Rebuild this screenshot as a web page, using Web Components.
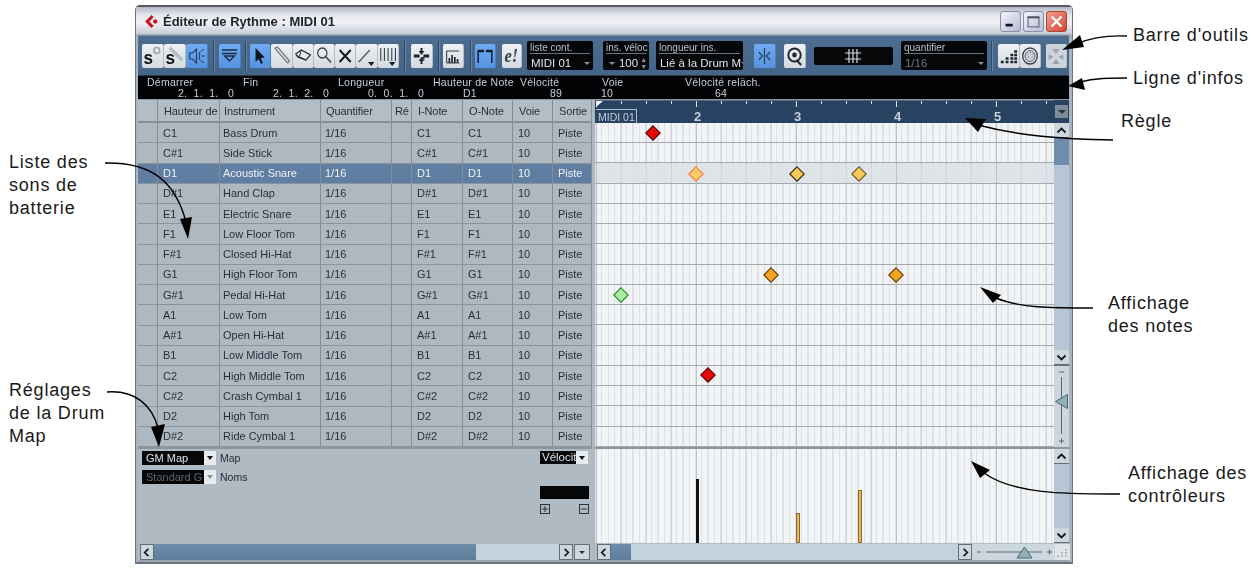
<!DOCTYPE html>
<html lang="fr">
<head>
<meta charset="utf-8">
<title>Éditeur de Rythme</title>
<style>
  html, body { margin: 0; background: #fff; overflow: hidden; }
  body { font-family: "Liberation Sans", Arial, sans-serif; }
</style>
</head>
<body>
<doc-page>
  <cb-window heading="Éditeur de Rythme : MIDI 01">
    <cb-toolbar>
      <cb-btn icon="solo" w="22"></cb-btn><cb-btn icon="link" w="22"></cb-btn><cb-btn icon="speaker" w="22" on></cb-btn>
      <cb-sep l="5" r="5"></cb-sep>
      <cb-btn icon="funnel" w="22" on></cb-btn>
      <cb-sep l="4" r="4"></cb-sep>
      <cb-btn icon="arrow" w="21.3" on></cb-btn><cb-btn icon="pencil" w="21.3"></cb-btn><cb-btn icon="eraser" w="21.3"></cb-btn><cb-btn icon="zoom" w="21.3"></cb-btn><cb-btn icon="cross" w="21.3"></cb-btn><cb-btn icon="line" w="21.3"></cb-btn><cb-btn icon="stick" w="21.2"></cb-btn>
      <cb-sep l="5" r="6"></cb-sep>
      <cb-btn icon="nudge" w="22"></cb-btn>
      <cb-sep l="5" r="4"></cb-sep>
      <cb-btn icon="level" w="21"></cb-btn>
      <cb-sep l="6" r="4"></cb-sep>
      <cb-btn icon="bars" w="21" on></cb-btn>
      <cb-btn icon="edit" w="20" style="margin-left:6px"></cb-btn>
      <cb-field label="liste cont." value="MIDI 01" w="66" caret style="margin-left:5px"></cb-field>
      <cb-field label="ins. véloc" value="100" w="46" spin style="margin-left:10px"></cb-field>
      <cb-field label="longueur ins." value="Lié à la Drum M" w="87" caret style="margin-left:7px"></cb-field>
      <cb-btn icon="snap" w="22" on style="margin-left:11px"></cb-btn>
      <cb-btn icon="quant" w="22" style="margin-left:8px"></cb-btn>
      <cb-grid-display style="margin-left:8px"></cb-grid-display>
      <cb-field label="quantifier" value="1/16" w="86" caret dim style="margin-left:8px"></cb-field>
      <cb-sep l="4" r="6"></cb-sep>
      <cb-btn icon="steps" w="22"></cb-btn><cb-btn icon="dial" w="21"></cb-btn>
      <cb-btn icon="pads" w="21" style="margin-left:5px" faded></cb-btn>
    </cb-toolbar>
    <cb-infoline></cb-infoline>
    <cb-editor>
      <drum-list slot="list"></drum-list>
      <map-panel slot="panel"></map-panel>
      <cb-hscroll slot="lscroll" thumb="322" rest="83" menu></cb-hscroll>
      <note-grid slot="grid">
        <cb-note x="57.7" y="10" fill="#e80808" edge="#5c0505"></cb-note>
        <cb-note x="101" y="50.5" fill="#ffcb62" edge="#f08050"></cb-note>
        <cb-note x="201.7" y="50.5" fill="#f7cb58" edge="#3c2c10"></cb-note>
        <cb-note x="263.5" y="50.5" fill="#f7cb58" edge="#6e5c30"></cb-note>
        <cb-note x="176" y="151.5" fill="#f5a623" edge="#6a3c08"></cb-note>
        <cb-note x="301" y="151.5" fill="#f5a623" edge="#6a3c08"></cb-note>
        <cb-note x="26" y="171.5" fill="#a6f2a0" edge="#2a8a30"></cb-note>
        <cb-note x="113" y="252" fill="#e80808" edge="#5c0505"></cb-note>
      </note-grid>
      <cb-vscroll slot="gridscroll" thumb="27" zoom></cb-vscroll>
      <ctrl-lane slot="lane"></ctrl-lane>
      <cb-vscroll slot="lanescroll"></cb-vscroll>
      <cb-hscroll slot="rscroll" thumb="0" rest="345" zoom></cb-hscroll>
    </cb-editor>
  </cb-window>
  <call-outs></call-outs>
</doc-page>

<script>
const FONT = '"Liberation Sans", Arial, sans-serif';

// small base so every element only has to give its css + markup
class Part extends HTMLElement {
  constructor() {
    super();
    this.attachShadow({ mode: 'open' });
  }
  connectedCallback() {
    this.shadowRoot.innerHTML = `<style>${this.css()}</style>${this.html()}`;
  }
  css() { return ':host{display:block}'; }
  html() { return '<slot></slot>'; }
}

class DocPage extends Part {
  css() { return `:host{display:block;position:relative;width:1251px;height:570px;box-sizing:border-box;padding:5px 0 0 135px;font-family:${FONT}}`; }
}

const CAPTION_BTN = {
  min: '<rect x="5" y="13" width="8" height="3" fill="#101828"/>',
  max: '<rect x="4.5" y="5.5" width="12" height="11" fill="none" stroke="#4a5060"/><rect x="4" y="5" width="13" height="2" fill="#4a5060"/>',
  close: '<path d="M5 5l11 11M16 5L5 16" stroke="#fff" stroke-width="2.6" fill="none"/>'
};

class CbWindow extends Part {
  css() {
    return `
    :host{display:block;width:938px;height:559px;box-sizing:border-box;border:1px solid #6d7280;border-top:2px solid #555a63;border-bottom:2px solid #6d7280;background:#a9b3bd;border-radius:5px 5px 0 0;filter:blur(.3px)}
    .frame{display:flex;flex-direction:column;height:100%;padding:0 3px 0 2px;box-sizing:border-box}
    .title{height:28px;flex:none;margin:0 -3px 0 -2px;padding:0 4px 0 8px;display:flex;align-items:center;gap:4px;
      background:linear-gradient(#b4b8c6 0,#e6e8ee 8px,#f0f1f5 16px,#c7cbd6 27px,#8b92a3 28px);font:bold 13px ${FONT};color:#20242c}
    .title svg.logo{flex:none;margin-top:1px}
    .title span{flex:1}
    .caps{display:flex;gap:2px;margin-right:1px}
    .cap{width:21px;height:21px;border-radius:3px;border:1px solid #8a8da4;box-sizing:border-box;background:linear-gradient(135deg,#f4f4fa,#b8bcd4)}
    .cap.x{background:linear-gradient(135deg,#f0a08c,#d6443a);border-color:#a8483c}
    .cap svg{display:block}
    `;
  }
  html() {
    const cap = (k, cls = '') => `<div class="cap ${cls}"><svg width="19" height="19" viewBox="0 0 21 21">${CAPTION_BTN[k]}</svg></div>`;
    return `<div class="frame">
      <div class="title">
        <svg class="logo" width="15" height="15" viewBox="0 0 14 14"><path d="M7 1L1 7l6 6 2-2-4-4 4-4z" fill="#c8141c"/><circle cx="10.5" cy="7" r="2" fill="#c8141c"/></svg>
        <span>${this.getAttribute('heading')}</span>
        <div class="caps">${cap('min')}${cap('max')}${cap('close', 'x')}</div>
      </div>
      <slot></slot>
    </div>`;
  }
}

class CbToolbar extends Part {
  css() {
    return `:host{display:flex;align-items:center;flex:none;height:40px;padding-left:4px;box-sizing:border-box;
      background:linear-gradient(#4c6d8f,#44658a);border-top:1px solid #7d93aa}`;
  }
}

class CbSep extends Part {
  connectedCallback() {
    this.style.margin = `0 ${this.getAttribute('r') || 4}px 0 ${this.getAttribute('l') || 4}px`;
    super.connectedCallback();
  }
  css() { return ':host{display:block;flex:none;width:1px;height:30px;background:#2f4a66;box-shadow:1px 0 #6584a3}'; }
  html() { return ''; }
}

const ICONS = {
  solo: '<text x="1.500" y="20" font-family="Liberation Sans" font-weight="bold" font-size="18" fill="#111">s</text><circle cx="15.500" cy="6.500" r="3" fill="none" stroke="#9aa4ae" stroke-width="1.6"/>',
  link: '<text x="1.500" y="20" font-family="Liberation Sans" font-weight="bold" font-size="18" fill="#111">s</text><path d="M6 4l13 12" stroke="#9aa4ae" stroke-width="3" fill="none"/><path d="M6.500 4.500l12 11" stroke="#e8ecef" stroke-width="1" fill="none"/>',
  speaker: '<path d="M4 9h3l4-4v14l-4-4H4z" fill="none" stroke="#24405e" stroke-width="1.2"/><path d="M14 8v8M16 12h4M15 8l4-3M15 16l4 3" stroke="#24405e" stroke-width="1"/>',
  funnel: '<path d="M3 6h16M3 9.500h16" stroke="#1c2e44" stroke-width="1.6"/><path d="M6 12h10l-5 5z" fill="none" stroke="#1c2e44" stroke-width="1.5"/>',
  arrow: '<path d="M6 4l0 14 3.500-3 2.500 5 2-1-2.500-5 4.500-.5z" fill="#0c1420"/>',
  pencil: '<path d="M4 4l14 15M7 3l13 14M4 4l3-1M18 19l2-2" stroke="#6d7680" stroke-width="1.2" fill="none"/>',
  eraser: '<path d="M3 10l6-4 10 5-5 5-9-3z" fill="#e8ecef" stroke="#222" stroke-width="1.1"/><path d="M3 11l11 5M9 6l-2 6" stroke="#222" stroke-width="1"/>',
  zoom: '<circle cx="9" cy="9" r="5" fill="none" stroke="#333c46" stroke-width="1.3"/><path d="M12.500 12.500l6 6" stroke="#333c46" stroke-width="1.6"/>',
  cross: '<path d="M5 6l12 12M17 6L5 18" stroke="#141a20" stroke-width="2.2"/>',
  line: '<path d="M3 18L15 6" stroke="#4a525c" stroke-width="1.4"/><path d="M13 18h7l-3.500 4z" fill="#141a20"/>',
  stick: '<path d="M3 4v13M7 4v13M11 4v13M15 4v13M19 4v13" stroke="#39424c" stroke-width="1.2"/><path d="M12 18h7l-3.500 4z" fill="#141a20"/>',
  nudge: '<path d="M3 12h6M13 12h6" stroke="#1c2430" stroke-width="3"/><path d="M11 4v3M11 17v3" stroke="#1c2430" stroke-width="2"/><path d="M8 7h6l-3 4zM14 16l-3-3 3 0z M8 17l3-4 3 4z" fill="#1c2430"/>',
  level: '<path d="M4 19V7h14M4 19h14" fill="none" stroke="#39424c" stroke-width="1.2"/><path d="M7 19v-5M10 19v-8M13 19v-6M16 19v-4" stroke="#1c2430" stroke-width="1.8"/>',
  bars: '<path d="M3.500 19V7h6M12.500 7h6v12" fill="none" stroke="#101c2c" stroke-width="1.6"/><path d="M3 7h7M12 7h7" stroke="#101c2c" stroke-width="2.6"/>',
  edit: '<text x="3" y="18" font-family="Liberation Serif" font-style="italic" font-weight="bold" font-size="19" fill="#34404c">e!</text>',
  snap: '<path d="M11 4v16" stroke="#24405e" stroke-width="1.2"/><path d="M5 8l4 4-4 4M17 8l-4 4 4 4" fill="none" stroke="#24405e" stroke-width="1.2"/>',
  quant: '<circle cx="11" cy="11" r="6.500" fill="none" stroke="#1c2430" stroke-width="2"/><circle cx="11" cy="11" r="2.400" fill="#1c2430"/><path d="M13 16l5 5" stroke="#1c2430" stroke-width="2"/>',
  steps: '<path d="M3 18h3M8 18h3M8 14.500h3M13 18h3M13 14.500h3M13 11h3M17 18h3M17 14.500h3M17 11h3M17 7.500h3" stroke="#1c2430" stroke-width="2.400"/>',
  dial: '<circle cx="11" cy="12" r="8" fill="none" stroke="#3b444e" stroke-width="1.5"/><circle cx="11" cy="12" r="5.500" fill="#c8ced4" stroke="#59626c"/><path d="M8 10h.6M11 8.500h.6M14 10h.6M9 13h.6M13 13h.6" stroke="#2a3138" stroke-width="1.2"/>',
  pads: '<path d="M7 5h8l-4 5zM3 10l5 3-5 3zM19 10l-5 3 5 3zM7 20h8l-4-5z" fill="#9aa3ab"/>'
};

class CbBtn extends Part {
  css() {
    const w = this.getAttribute('w') || 21;
    const on = this.hasAttribute('on');
    return `:host{display:block;flex:none;width:${w}px;height:24px;box-sizing:border-box;border-radius:2px;
      background:${on ? 'linear-gradient(#6fabf2,#5593e0)' : this.hasAttribute('faded') ? '#cdd5db' : 'linear-gradient(#eef1f3,#d4dae0)'};
      border-right:1px solid ${on ? '#4b80c4' : '#b4bdc6'}}
      svg{display:block;width:100%;height:100%}`;
  }
  html() {
    return `<svg viewBox="0 0 22 24" preserveAspectRatio="none">${ICONS[this.getAttribute('icon')] || ''}</svg>`;
  }
}

class CbField extends Part {
  css() {
    return `:host{display:block;flex:none;width:${this.getAttribute('w')}px;height:29px;box-sizing:border-box;background:#050709;padding:1px 3px;border-radius:2px;color:#dfe4e8;font:10px ${FONT};overflow:hidden}
    .l{height:11px;line-height:11px;border-bottom:1px solid #6a727a;color:#b8c0c8;white-space:nowrap}
    .v{display:flex;align-items:center;height:15px;font-size:11.5px;white-space:nowrap;margin-left:1px;margin-top:1px}
    .v span{flex:1}
    .dim{color:#70787f}
    i{flex:none;width:0;height:0;border:3px solid transparent;border-top:3px solid #8a929a;border-bottom:0;margin:1px 0 0 0}
    .pre{flex:none;margin:1px 4px 0 2px}
    .spin{flex:none;font-size:7px;line-height:7px;color:#8a929a;margin-left:2px;text-align:center}`;
  }
  html() {
    const caret = this.hasAttribute('caret') ? '<i></i>' : '';
    const pre = this.hasAttribute('spin') ? '<i class="pre"></i>' : '';
    const spin = this.hasAttribute('spin') ? '<div class="spin">▲<br>▼</div>' : '';
    return `<div class="l">${this.getAttribute('label')}</div>
      <div class="v ${this.hasAttribute('dim') ? 'dim' : ''}">${pre}<span>${this.getAttribute('value')}</span>${spin}${caret}</div>`;
  }
}

class CbGridDisplay extends Part {
  css() { return ':host{display:flex;flex:none;width:79px;height:18px;background:#050709;border-radius:2px;align-items:center;justify-content:center}'; }
  html() { return '<svg width="16" height="14" viewBox="0 0 16 14"><path d="M4 0v14M8 0v14M12 0v14M0 4h16M0 10h16" stroke="#d8dee2" stroke-width="1.2"/></svg>'; }
}

const INFO = [
  { w: 96, pad: 0, label: 'Démarrer', vpad: 31, value: '2.&nbsp; 1.&nbsp; 1.&nbsp;&nbsp; 0' },
  { w: 95, pad: 0, label: 'Fin', vpad: 30, value: '2.&nbsp; 1.&nbsp; 2.&nbsp;&nbsp; 0' },
  { w: 95, pad: 0, label: 'Longueur', vpad: 30, value: '0.&nbsp; 0.&nbsp; 1.&nbsp;&nbsp; 0' },
  { w: 87, pad: 0, label: 'Hauteur de Note', vpad: 30, value: 'D1' },
  { w: 81, pad: 0, label: 'Vélocité', vpad: 30, value: '89' },
  { w: 84, pad: 1, label: 'Voie', vpad: 0, value: '10' },
  { w: 200, pad: 0, label: 'Vélocité reläch.', vpad: 30, value: '64' }
];

class CbInfoline extends Part {
  css() {
    return `:host{display:flex;flex:none;height:25px;box-sizing:border-box;background:#020304;padding:1px 0 0 9px;color:#c8ced4;font:10.5px ${FONT};letter-spacing:.25px;border-top:1px solid #2a3a4a;border-bottom:1px solid #8c98a4}
    .c{flex:none;line-height:10.5px;white-space:nowrap}`;
  }
  html() {
    return INFO.map(c => `<div class="c" style="width:${c.w}px">
      <div style="padding-left:${c.pad}px">${c.label}</div>
      <div style="padding-left:${c.vpad}px">${c.value}</div></div>`).join('');
  }
}

// main area: two columns, upper lists + lower lanes + scrollbars
class CbEditor extends Part {
  css() {
    return `:host{display:grid;flex:1;min-height:0;grid-template-columns:454px 3px 459px 15px;grid-template-rows:347px 2px 94px 17px;background:#9aa5af}
    .gap{background:#aeb8c1;grid-row:1/5;grid-column:2}
    .split{background:#8c969f;grid-row:2;grid-column:3/5}
    .splitl{background:#8c969f;grid-row:2;grid-column:1}`;
  }
  html() {
    const s = (n, st) => `<slot name="${n}" style="display:block;${st}"></slot>`;
    return `<div class="gap"></div><div class="splitl"></div><div class="split"></div>
      <div style="grid-row:1;grid-column:1;min-height:0;min-width:0">${s('list')}</div>
      <div style="grid-row:3;grid-column:1">${s('panel', 'height:100%')}</div>
      <div style="grid-row:4;grid-column:1">${s('lscroll')}</div>
      <div style="grid-row:1;grid-column:3;min-width:0">${s('grid')}</div>
      <div style="grid-row:1;grid-column:4">${s('gridscroll')}</div>
      <div style="grid-row:3;grid-column:3">${s('lane')}</div>
      <div style="grid-row:3;grid-column:4">${s('lanescroll')}</div>
      <div style="grid-row:4;grid-column:3/5">${s('rscroll')}</div>`;
  }
}

const DRUMS = [
  ['C1', 'Bass Drum', 'C1'], ['C#1', 'Side Stick', 'C#1'], ['D1', 'Acoustic Snare', 'D1'], ['D#1', 'Hand Clap', 'D#1'],
  ['E1', 'Electric Snare', 'E1'], ['F1', 'Low Floor Tom', 'F1'], ['F#1', 'Closed Hi-Hat', 'F#1'], ['G1', 'High Floor Tom', 'G1'],
  ['G#1', 'Pedal Hi-Hat', 'G#1'], ['A1', 'Low Tom', 'A1'], ['A#1', 'Open Hi-Hat', 'A#1'], ['B1', 'Low Middle Tom', 'B1'],
  ['C2', 'High Middle Tom', 'C2'], ['C#2', 'Crash Cymbal 1', 'C#2'], ['D2', 'High Tom', 'D2'], ['D#2', 'Ride Cymbal 1', 'D#2']
];
const PADS = [0, 5, 3, 4, 0, 5, 5, 5, 5];

class DrumList extends Part {
  css() {
    return `:host{display:grid;height:347px;grid-template-columns:20px 62px 101px 71px 20px 51px 50px 40px 39px;grid-template-rows:23px repeat(16,20.25px);font:11px ${FONT};color:#26303b;background:#aeb8c1}
    div{box-sizing:border-box;border-right:1px solid #838e99;border-bottom:1px solid #8a949e;white-space:nowrap;overflow:hidden;display:flex;align-items:center}
    .h{background:#b3bdc6;border-bottom:2px solid #838e99;letter-spacing:-.1px}
    .sel{background:#5f7ea1;color:#eef2f6}`;
  }
  html() {
    const heads = ['', 'Hauteur de', 'Instrument', 'Quantifier', 'Ré', 'I-Note', 'O-Note', 'Voie', 'Sortie'];
    let out = heads.map((h, i) => `<div class="h" style="padding-left:${i === 4 ? 3 : PADS[i] + (i ? 1 : 0)}px">${h}</div>`).join('');
    DRUMS.forEach((d, r) => {
      const sel = r === 2 ? 'sel' : '';
      [ '', d[0], d[1], '1/16', '', d[2], d[2], '10', 'Piste' ].forEach((t, i) => {
        out += `<div class="${sel}" style="padding-left:${PADS[i]}px">${t}</div>`;
      });
    });
    return out;
  }
}

class MapPanel extends Part {
  css() {
    return `:host{display:flex;justify-content:space-between;height:94px;box-sizing:border-box;background:#b0bac3;padding:2px 3px 0 4px;font:10.5px ${FONT};color:#1e2833}
    .rows{display:flex;flex-direction:column;gap:5px}
    .row{display:flex;align-items:center;gap:4px;height:14px}
    .box{width:62px;height:14px;background:#050709;color:#dfe4e8;font-size:11px;line-height:14px;padding-left:4px;box-sizing:border-box;white-space:nowrap}
    .dim{color:#5c646c}
    .dd{width:12px;height:14px;background:#e8ecef;margin-left:-4px;display:flex;align-items:center;justify-content:center}
    .dd i{width:0;height:0;border:3.5px solid transparent;border-top:4px solid #111;border-bottom:0}
    .dd.off i{border-top-color:#8b939b}
    .right{width:49px;display:flex;flex-direction:column}
    .vel{display:flex;height:13px}
    .vel .box{width:36px;padding-left:2px;font-size:11.5px;line-height:13px;height:13px}
    .vel .dd{height:13px;margin:0}
    .bar{height:13px;background:#050709;margin-top:22px}
    .pm{display:flex;justify-content:space-between;margin-top:5px}
    .pm svg{display:block}`;
  }
  html() {
    return `<div class="rows">
        <div class="row"><div class="box">GM Map</div><div class="dd"><i></i></div><span>Map</span></div>
        <div class="row"><div class="box dim">Standard G</div><div class="dd off"><i></i></div><span>Noms</span></div>
      </div>
      <div class="right">
        <div class="vel"><div class="box">Vélocit</div><div class="dd"><i></i></div></div>
        <div class="bar"></div>
        <div class="pm">
          <svg width="10" height="10" viewBox="0 0 10 10"><rect x=".5" y=".5" width="9" height="9" fill="none" stroke="#2a333c"/><path d="M2 5h6M5 2v6" stroke="#2a333c"/></svg>
          <svg width="10" height="10" viewBox="0 0 10 10"><rect x=".5" y=".5" width="9" height="9" fill="none" stroke="#2a333c"/><path d="M2 5h6" stroke="#2a333c"/></svg>
        </div>
      </div>`;
  }
}

// shared grid lines of the note display and the controller lane
const LINES_V = `repeating-linear-gradient(90deg,transparent 0 1px,#bcc2c6 1px 2px,transparent 2px 100px),
  repeating-linear-gradient(90deg,transparent 0 1px,#cfd5da 1px 2px,transparent 2px 25px),
  repeating-linear-gradient(90deg,#dde2e6 0 1px,transparent 1px 6.25px)`;

class NoteGrid extends Part {
  css() {
    return `:host{display:flex;flex-direction:column;height:347px}
    .ruler{flex:none;height:23px;position:relative;background:#274361;box-sizing:border-box;overflow:hidden;color:#c4d0da;font:bold 13px ${FONT}}
    .ruler svg{position:absolute;left:0;top:0}
    .ruler b{position:absolute;top:9px;font-size:13px}
    .midi{position:absolute;left:1px;top:9px;width:41px;height:14px;box-sizing:border-box;border:1px solid #aebccb;border-bottom:0;border-left:0;font:10.5px/14px ${FONT};color:#c2ccd6;padding-left:2px;white-space:nowrap}
    .cv{flex:1;position:relative;overflow:hidden;background:
      repeating-linear-gradient(180deg,transparent 0 19.25px,#a3a9ad 19.25px 20.25px),
      ${LINES_V},
      linear-gradient(180deg,transparent 40.5px,#dfe4e9 40.5px 60.75px,transparent 60.75px),#f1f3f5}`;
  }
  html() {
    let ticks = '';
    for (let i = 0; i < 19; i++) {
      const x = 1.5 + i * 25;
      ticks += `<path d="M${x} 1v${i % 4 === 0 ? 6 : 3}" stroke="#dde4ea"/>`;
    }
    const nums = [2, 3, 4, 5].map((n, i) => `<b style="left:${99 + i * 100}px">${n}</b>`).join('');
    return `<div class="ruler">
        <svg width="459" height="23">${ticks}<path d="M1 1h7l-7 6z" fill="#f0f4f8"/><path d="M0 0h459" stroke="#8d99a5"/></svg>
        <div class="midi">MIDI 01</div>${nums}
      </div>
      <div class="cv"><slot></slot></div>`;
  }
}

class CbNote extends Part {
  css() {
    return `:host{position:absolute;left:${this.getAttribute('x') - 8}px;top:${this.getAttribute('y') - 8}px;width:16px;height:16px;display:block}
      svg{display:block}`;
  }
  html() {
    return `<svg width="16" height="16" viewBox="0 0 16 16"><path d="M8 .8L15.2 8 8 15.2.8 8z" fill="${this.getAttribute('fill')}" stroke="${this.getAttribute('edge')}" stroke-width="1.2"/></svg>`;
  }
}

class CtrlLane extends Part {
  css() {
    return `:host{display:flex;align-items:flex-end;height:94px;position:relative;background:${LINES_V},#f2f4f5}
      i{position:absolute;bottom:0;width:3px}`;
  }
  html() {
    return `<i style="left:101px;height:64px;background:#111"></i>
      <i style="left:201px;height:30px;background:#e6b45e;border:1px solid #8a6a30;box-sizing:border-box;width:4px"></i>
      <i style="left:263px;height:53px;background:#e6b45e;border:1px solid #8a6a30;box-sizing:border-box;width:4px"></i>`;
  }
}

const chev = d => `<svg width="13" height="13" viewBox="0 0 13 13"><path d="${d}" fill="none" stroke="#10161c" stroke-width="1.8"/></svg>`;

class CbVscroll extends Part {
  css() {
    const zoom = this.hasAttribute('zoom');
    return `:host{display:flex;flex-direction:column;height:${zoom ? 347 : 94}px;background:#7c8c9c}
      .pad{flex:none;height:${zoom ? 23 : 0}px;background:#274361;display:flex;align-items:center;justify-content:center;box-sizing:border-box}
      .pad i{width:13px;height:13px;background:#7e8c99;display:flex;align-items:center;justify-content:center}
      .pad i::after{content:"";border:4px solid transparent;border-top:4px solid #27323c;border-bottom:0}
      .b{flex:none;height:14px;background:#cfd6dc;display:flex;align-items:center;justify-content:center;border-bottom:1px solid #5f7080}
      .thumb{flex:none;height:${this.getAttribute('thumb') || 0}px;background:#6f8dab}
      .track{flex:1;background:#b6c6d6}
      .zoom{flex:none;height:81px;background:#ccd6de;position:relative;border-top:1px solid #5f7080;color:#4a5560}
      .zoom svg{position:absolute;left:0;top:0}`;
  }
  html() {
    const zoom = this.hasAttribute('zoom');
    return `${zoom ? '<div class="pad"><i></i></div>' : ''}
      <div class="b">${chev('M2.5 8.5l4-4 4 4')}</div>
      <div class="thumb"></div><div class="track"></div>
      <div class="b">${chev('M2.5 4.5l4 4 4-4')}</div>
      ${zoom ? `<div class="zoom"><svg width="15" height="81" viewBox="0 0 15 81">
        <path d="M7.5 11v57M5 6h5M5 75h5M7.5 72.500v5" stroke="#5a6670" fill="none"/>
        <path d="M1.500 35.500l12-7v14z" fill="#8fb2b8" stroke="#4c6670" stroke-width="1"/></svg></div>` : ''}`;
  }
}

class CbHscroll extends Part {
  css() {
    return `:host{display:flex;height:17px;background:#b0bbc5;box-sizing:border-box;padding:1px 0 0 2px;align-items:stretch}
      .b{flex:none;width:14px;background:#cfd6dc;display:flex;align-items:center;justify-content:center;border:1px solid #5f7080;box-sizing:border-box}
      .thumb{flex:none;background:linear-gradient(#6f8dab,#5f7e9c)}
      .track{flex:none;background:#c4d2de}
      .m{flex:none;width:16px;margin:0 1px;background:#cfd6dc;border:1px solid #5f7080;box-sizing:border-box;display:flex;align-items:center;justify-content:center}
      .m::after{content:"";border:3px solid transparent;border-top:3px solid #27323c;border-bottom:0}
      .z{flex:none;width:83px;background:#ccd6de;display:block}
      .grip{flex:none;width:15px;background:#dfe4e8}`;
  }
  html() {
    const zoom = this.hasAttribute('zoom');
    const thumb = +this.getAttribute('thumb');
    const rest = +this.getAttribute('rest');
    return `<div class="b">${chev('M8 2.500l-4 4 4 4')}</div>
      <div class="thumb" style="width:${zoom ? 20 : thumb}px"></div>
      <div class="track" style="width:${zoom ? 327 : rest}px"></div>
      <div class="b">${chev('M5 2.500l4 4-4 4')}</div>
      ${this.hasAttribute('menu') ? '<div class="m"></div>' : ''}
      ${zoom ? `<svg class="z" viewBox="0 0 83 16" width="83" height="16">
          <path d="M5 8h4M14 8h56M75 8h5M77.500 5.500v5" stroke="#5a6670" fill="none"/>
          <path d="M45 14l7.500-11 7.500 11z" fill="#8fb2b8" stroke="#4c6670" stroke-width="1"/></svg>
        <svg class="grip" viewBox="0 0 15 16" width="15" height="16"><path d="M10 6h2M6 9h2M10 9h2M2 12h2M6 12h2M10 12h2" stroke="#8b949c"/></svg>` : ''}`;
  }
}

// annotations round the window
const ARROWS = [
  ['M1127 36C1105 35 1090 38 1076 44', 'M1062 50L1080 35 1084 47z'],
  ['M1127 78C1110 78 1095 78 1080 82', 'M1068 86L1082 78 1085 90z'],
  ['M1113 140C1060 139 1020 136 978 125', 'M965 118L986 119 978 132z'],
  ['M105 163C150 162 175 180 186 222', 'M188 239L180 219 192 217z'],
  ['M107 392C135 390 152 405 158 428', 'M159 447L151 427 165 424z'],
  ['M1093 308C1050 308 1020 308 996 298', 'M980 287L1001 295 993 303z'],
  ['M1120 494C1070 494 1015 495 984 473', 'M971 461L990 470 980 478z']
];
const LABELS = [
  [1133, 24, "Barre d'outils"], [1133, 67, "Ligne d'infos"], [1121, 110, 'Règle'],
  [9, 151, 'Liste des<br>sons de<br>batterie'], [9, 379, 'Réglages<br>de la Drum<br>Map'],
  [1108, 292, 'Affichage<br>des notes'], [1128, 462, 'Affichage des<br>contrôleurs']
];

class CallOuts extends Part {
  css() {
    return `:host{position:absolute;left:0;top:0;width:1251px;height:570px;pointer-events:none;display:block}
      svg{position:absolute;left:0;top:0}
      div{position:absolute;font:18px/23px ${FONT};letter-spacing:.8px;color:#1a1a1a;white-space:nowrap}`;
  }
  html() {
    const paths = ARROWS.map(a => `<path d="${a[0]}" fill="none" stroke="#000" stroke-width="1.4"/><path d="${a[1]}" fill="#000"/>`).join('');
    return `<svg width="1251" height="570">${paths}</svg>` +
      LABELS.map(l => `<div style="left:${l[0]}px;top:${l[1]}px">${l[2]}</div>`).join('');
  }
}

const parts = {
  'doc-page': DocPage, 'cb-window': CbWindow, 'cb-toolbar': CbToolbar, 'cb-sep': CbSep, 'cb-btn': CbBtn,
  'cb-field': CbField, 'cb-grid-display': CbGridDisplay, 'cb-infoline': CbInfoline, 'cb-editor': CbEditor,
  'drum-list': DrumList, 'map-panel': MapPanel, 'note-grid': NoteGrid, 'cb-note': CbNote, 'ctrl-lane': CtrlLane,
  'cb-vscroll': CbVscroll, 'cb-hscroll': CbHscroll, 'call-outs': CallOuts
};
Object.keys(parts).forEach(name => customElements.define(name, parts[name]));
</script>
</body>
</html>
